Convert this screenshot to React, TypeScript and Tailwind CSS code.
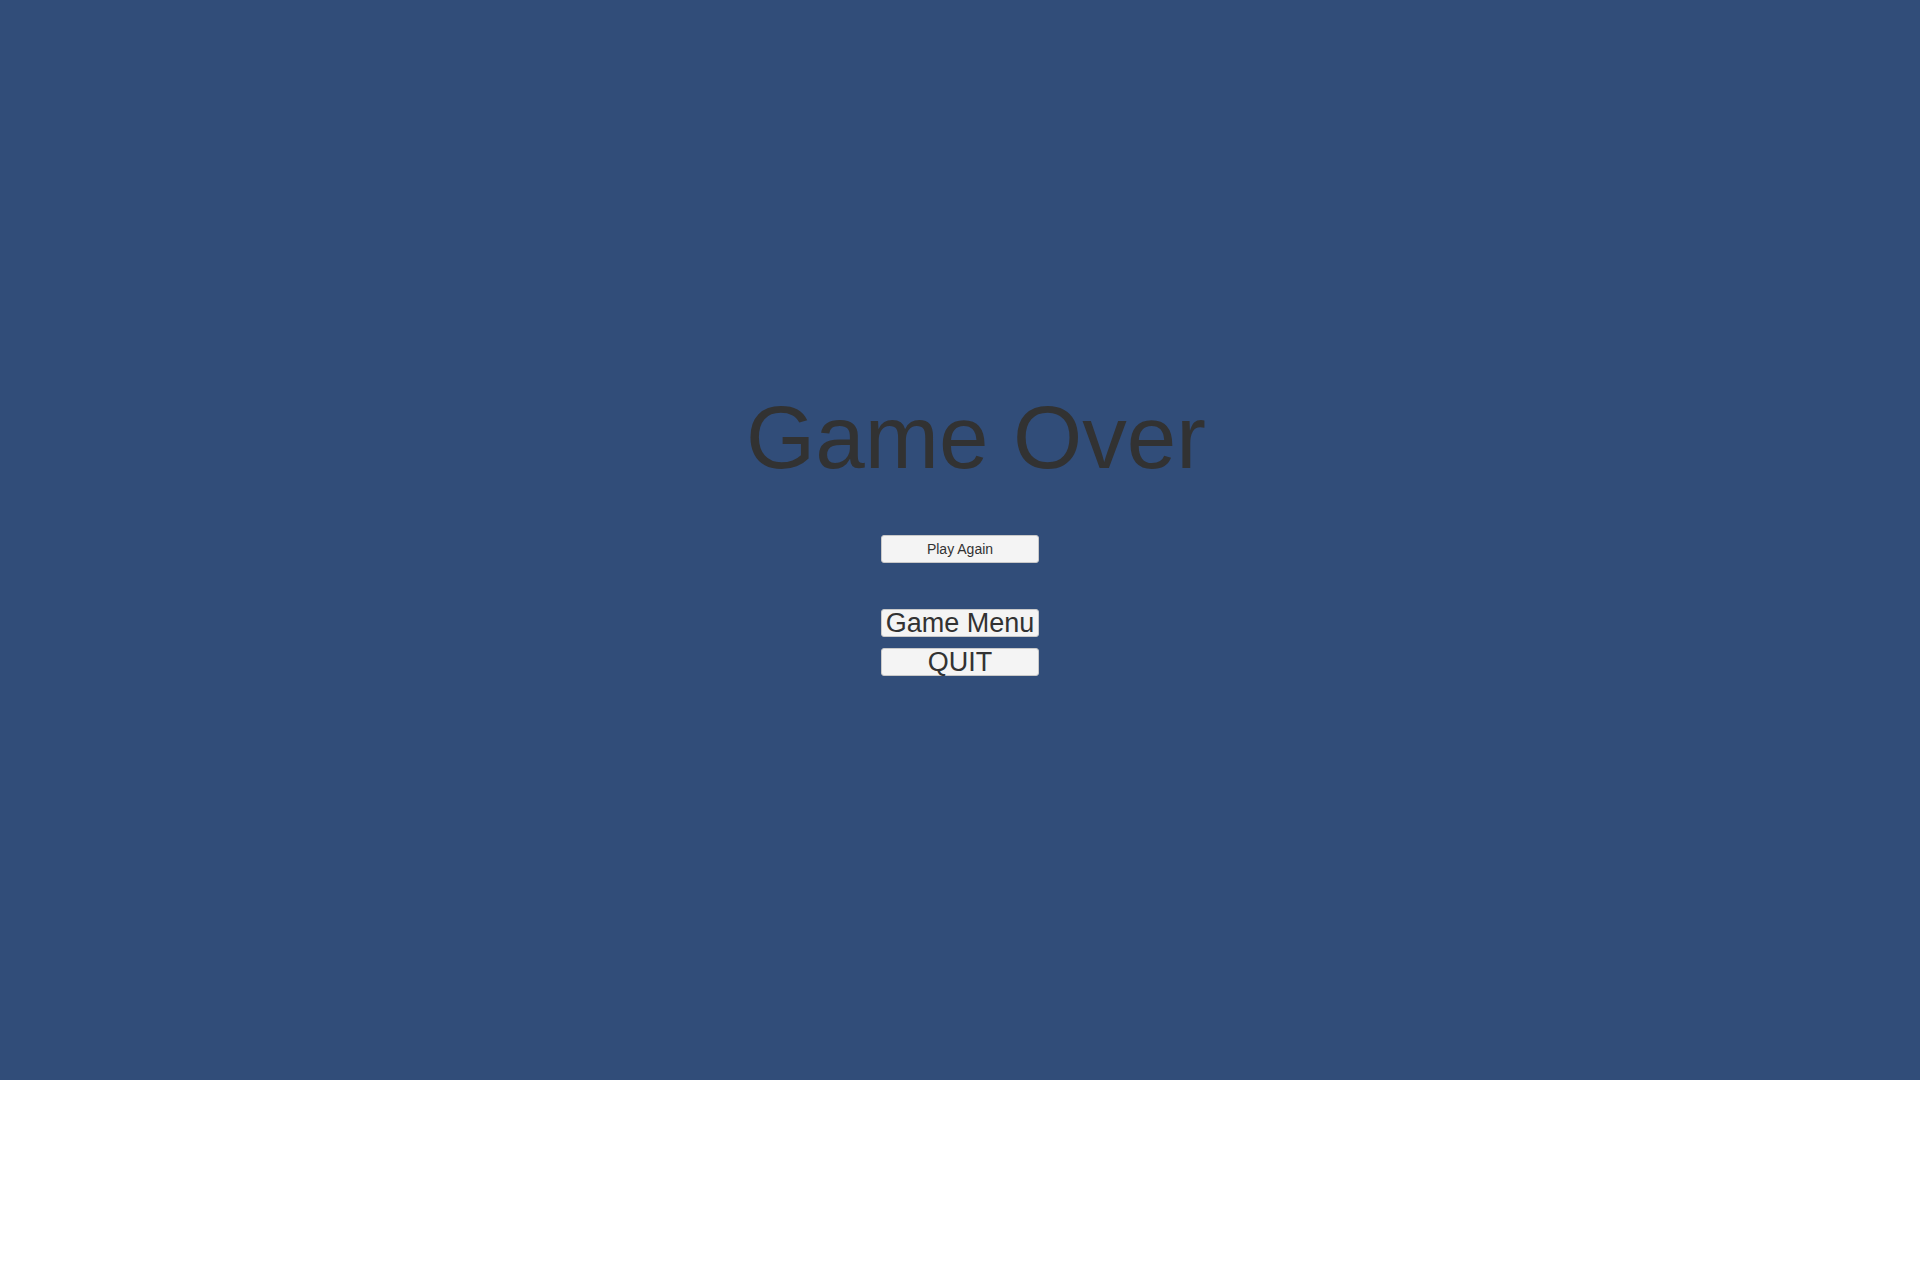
import React from "react";

const btn =
  "w-[158px] h-[28px] bg-[#f4f4f4] border border-[#c9c9c9] rounded-[3px] flex items-center justify-center text-[#323232] leading-none";

export default function App() {
  return (
    <div className="w-[1920px] h-[1274px] bg-white" style={{ fontFamily: '"Liberation Sans", Arial, sans-serif' }}>
      <div className="w-full h-[1080px] bg-[#314D79] flex flex-col items-center pt-[393px]">
        <h1 className="text-[89px] leading-[89px] text-[#323232] ml-[32px] font-normal">Game Over</h1>
        <button className={`${btn} mt-[53px] text-[14px]`}>Play Again</button>
        <button className={`${btn} mt-[46px] text-[27px]`}>Game Menu</button>
        <button className={`${btn} mt-[11px] text-[27px]`}>QUIT</button>
      </div>
    </div>
  );
}
